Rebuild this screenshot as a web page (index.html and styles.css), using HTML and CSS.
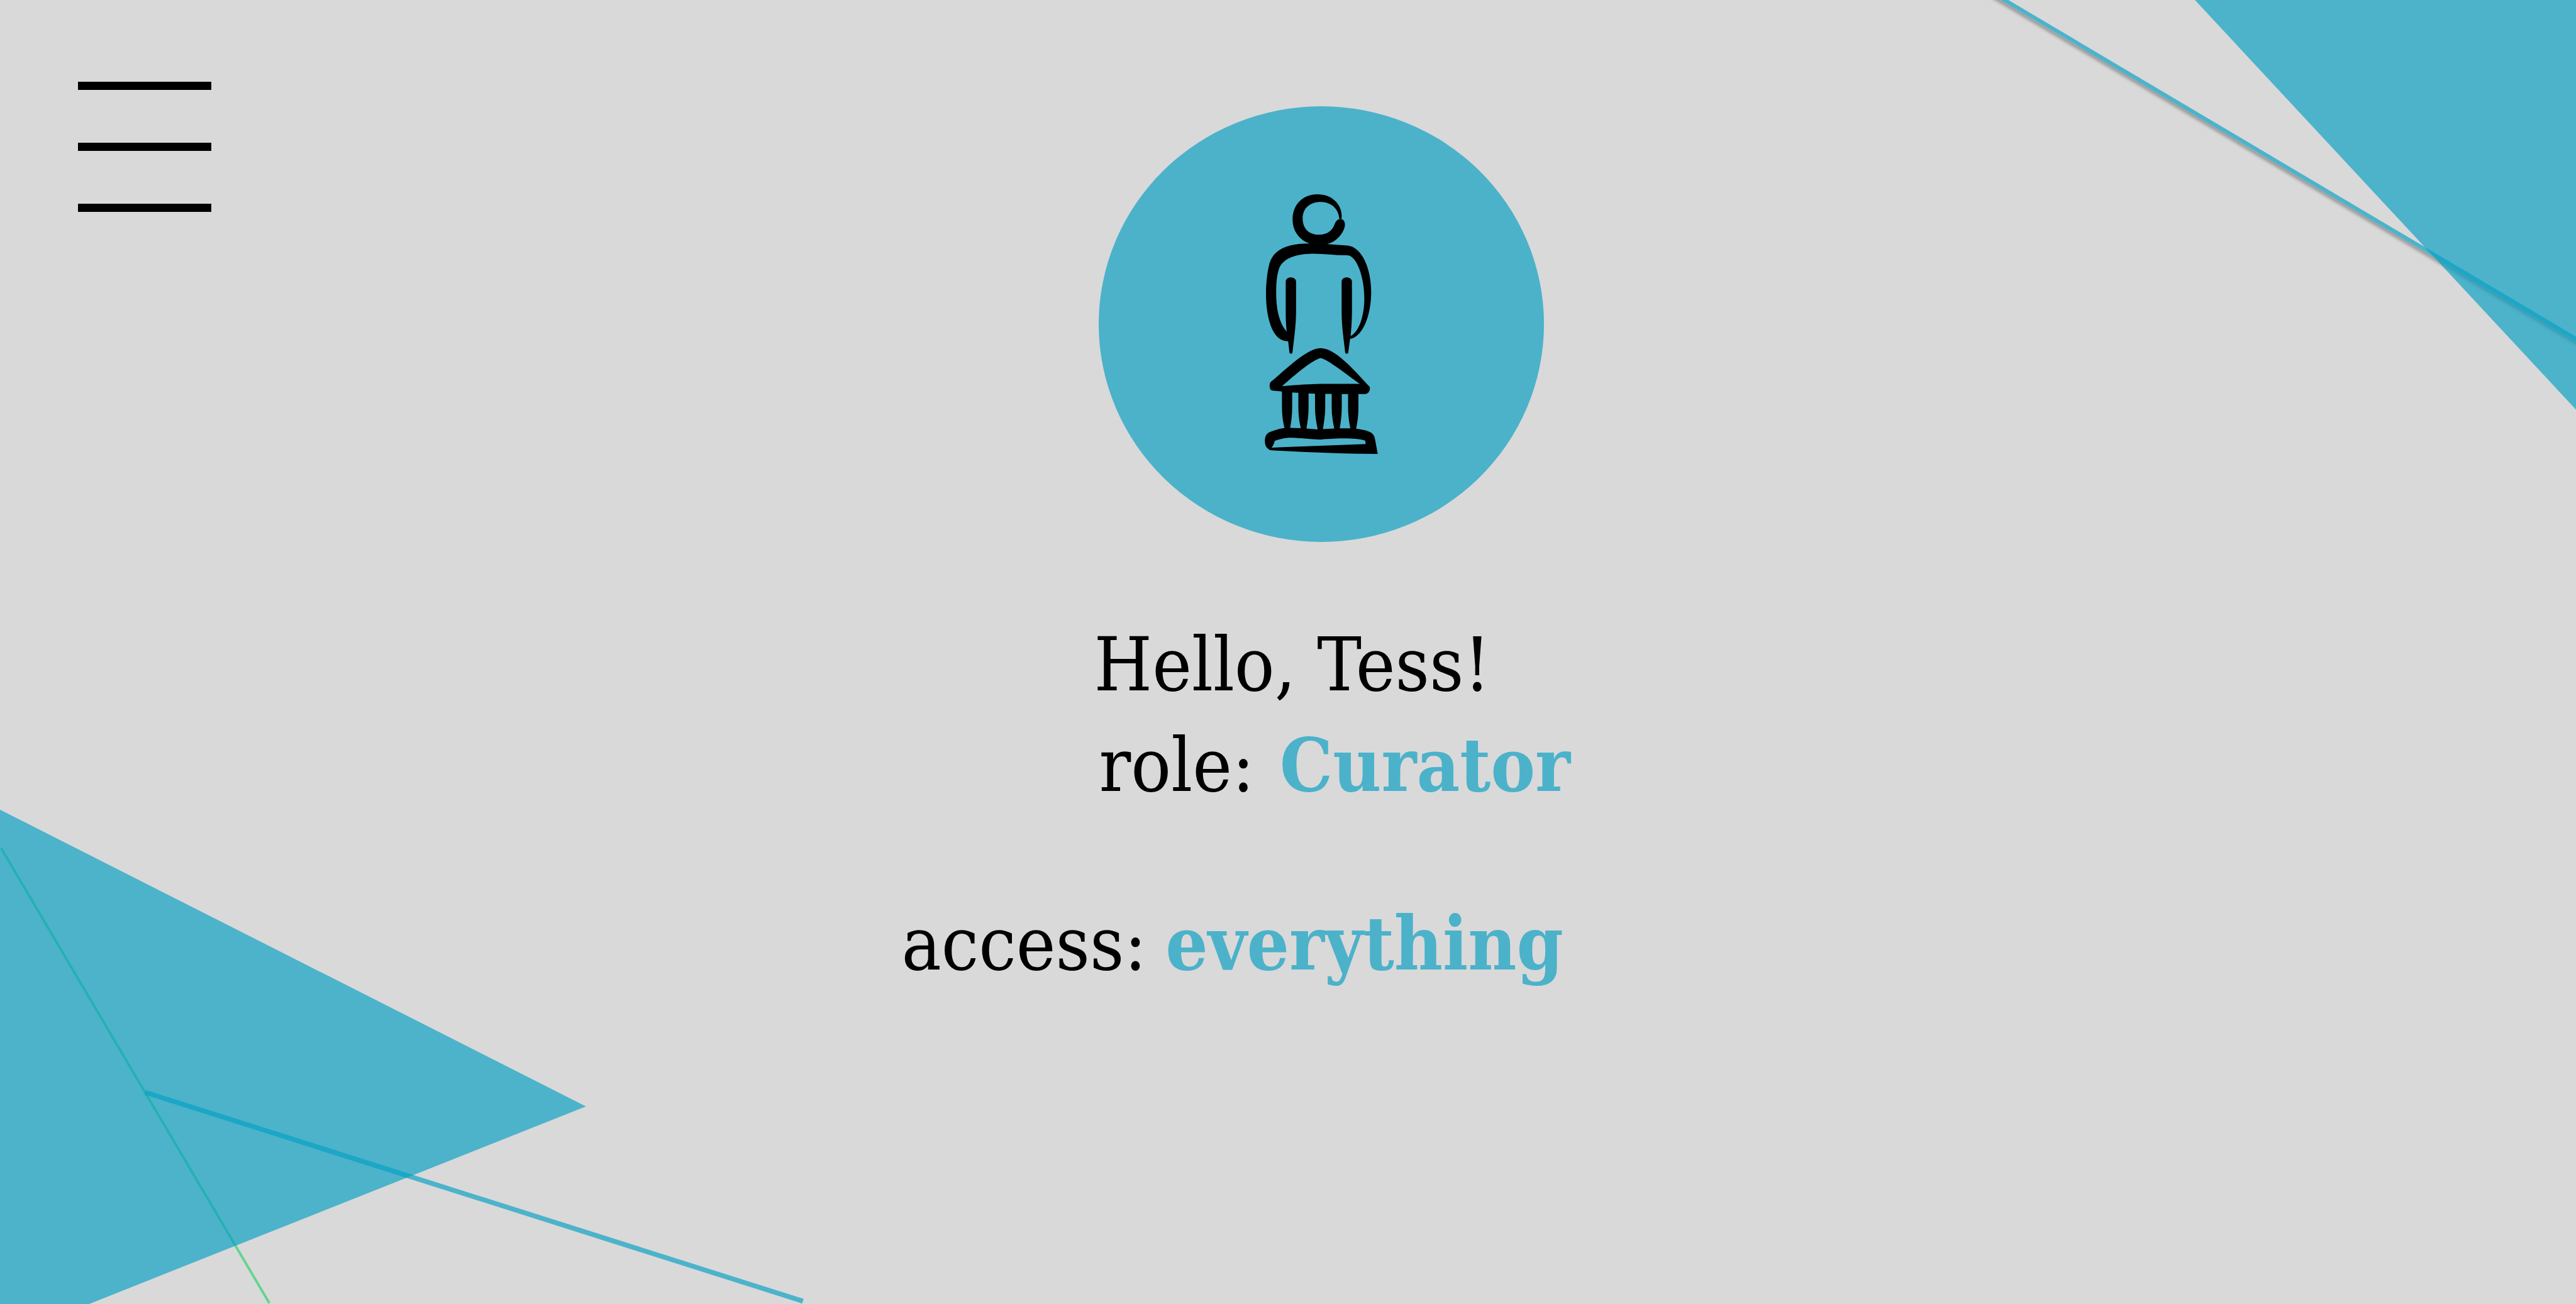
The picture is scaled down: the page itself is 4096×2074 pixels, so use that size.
FILE: index.html
```html
<!DOCTYPE html>
<html lang="en">
<head>
  <meta charset="utf-8">
  <meta name="viewport" content="width=device-width, initial-scale=1">
  <title>Profile</title>
  <link rel="stylesheet" href="styles.css">
</head>
<body>
  <svg class="backdrop" viewBox="0 0 6388 3234" preserveAspectRatio="none" aria-hidden="true">
    <defs>
      <filter id="soft" filterUnits="userSpaceOnUse" x="4800" y="-100" width="1700" height="1100">
        <feGaussianBlur stdDeviation="4"/>
      </filter>
      <clipPath id="below-ray">
        <path d="M4871 -53L6488 906V1000H4871Z"/>
      </clipPath>
    </defs>
    <g clip-path="url(#below-ray)">
      <path class="shadow" filter="url(#soft)" d="M4871 -51L6488 908"/>
    </g>
    <path class="shape" d="M5443 0H6388V1016Z"/>
    <path class="ray" d="M4871 -59L6488 900"/>
    <path class="thread" d="M3 2104L668 3232"/>
    <path class="shape" d="M0 2008L1453 2744L221 3234H0Z"/>
    <path class="ray ray-wide" d="M360 2709L1991 3227"/>
  </svg>

  <header class="topbar">
    <button class="menu" type="button" aria-label="Menu">
      <span class="bar"></span>
      <span class="bar"></span>
      <span class="bar"></span>
    </button>
  </header>

  <main class="profile">
    <div class="avatar">
      <svg class="curator" viewBox="168 125 840 1933" role="img" aria-label="Curator">
        <path d="M722 308C716 232 662 182 582 182C500 182 449 232 449 305C449 380 496 426 570 426C634 426 668 396 686 350C696 324 712 309 730 309C752 309 764 328 764 352C762 382 746 412 722 440C698 468 668 486 632 496L780 507C890 514 960 680 959 856C958 1040 890 1188 802 1202L788 1306Q786 1312 777 1312Q768 1312 766 1306C752 1180 739 1110 739 990V772C742 734 812 734 816 772V990C816 1060 812 1120 806 1180C868 1150 908 1030 908 900C908 740 850 578 780 579C690 580 610 566 520 567C390 570 306 604 276 672C258 720 252 780 252 858C252 990 278 1090 330 1146C324 1090 323 1050 323 990V772C326 734 396 734 400 772V990C400 1100 386 1190 373 1306Q371 1312 362 1312Q353 1312 351 1306L341 1219C240 1226 176 1080 176 860C177 780 186 700 202 640C230 540 330 490 500 491C424 464 374 398 374 312C374 202 450 125 558 125C670 125 740 200 740 290L738 308Z"/>
        <path fill-rule="evenodd" d="M211 1522C330 1424 480 1270 584 1270C690 1270 830 1430 934 1544Q950 1556 950 1568Q948 1606 918 1612H864V1716C864 1776 856 1826 847 1870C888 1876 930 1884 956 1898C974 1908 984 1926 988 1950L1008 2058C740 2056 460 2046 206 2030C200 2028 198 2022 190 2018C174 2006 168 1986 168 1960C168 1926 180 1904 212 1892C246 1878 280 1868 314 1865C303 1820 295 1770 295 1708V1594L226 1586C212 1586 210 1580 208 1574C200 1554 202 1536 211 1522ZM296 1554C400 1544 510 1536 640 1536H874C780 1470 640 1356 584 1344C530 1352 390 1468 296 1554ZM371 1600V1712C371 1770 364 1820 356 1864L435 1866C424 1820 417 1770 417 1712V1603ZM493 1608V1712C493 1770 486 1820 477 1869L561 1875C550 1820 541 1770 541 1712V1610ZM617 1611V1712C617 1770 608 1820 600 1873L684 1868C674 1820 665 1770 665 1712V1611ZM740 1612V1712C740 1770 733 1820 725 1867L804 1867C794 1820 787 1770 787 1712V1612ZM242 1961C236 1980 230 1996 218 2011L918 1984L914 1958C840 1940 750 1938 580 1951C470 1948 350 1926 292 1946Q264 1952 242 1961Z"/>
      </svg>
    </div>

    <div class="identity">
      <h1 class="line">Hello, Tess!</h1>
      <p class="line pair role"><span>role:</span><strong>Curator</strong></p>
    </div>
    <p class="line pair access"><span>access:</span><strong>everything</strong></p>
  </main>
</body>
</html>
```
FILE: styles.css
```css
* {
  box-sizing: border-box;
}

body {
  position: relative;
  min-height: 100vh;
  margin: 0;
  overflow-x: hidden;
  background: #d9d9d9;
  color: #000;
  font-family: "DejaVu Serif Condensed", "Liberation Serif", serif;
  font-size: 118px;
}

/* Decorative shapes behind the content */
.backdrop {
  position: absolute;
  inset: 0;
  z-index: -1;
  width: 100%;
  height: 100%;
}

.shape {
  fill: rgba(7, 160, 195, 0.675);
}

.ray,
.thread,
.shadow {
  fill: none;
}

.ray {
  stroke: rgba(7, 160, 195, 0.675);
  stroke-width: 10;
}

.ray-wide {
  stroke-width: 12;
}

.thread {
  stroke: #60d58e;
  stroke-width: 6;
}

.shadow {
  stroke: rgba(0, 0, 0, 0.32);
  stroke-width: 10;
}

.topbar {
  display: flex;
  height: 169px;
  padding: 130px 124px 0;
}

.menu {
  display: flex;
  flex-direction: column;
  gap: 84px;
  width: 212px;
  height: 207px;
  padding: 0;
  border: 0;
  background: none;
  cursor: pointer;
}

.bar {
  flex: none;
  width: 100%;
  height: 13px;
  background: #000;
}

.profile {
  display: flex;
  flex-direction: column;
  align-items: flex-start;
  padding-left: 35%;
}

.avatar {
  display: flex;
  align-items: center;
  justify-content: center;
  width: 708px;
  height: 693px;
  margin-left: 313px;
  border-radius: 50%;
  background: #4bb2ca;
}

.curator {
  width: 180px;
  height: 413px;
}

.identity {
  margin: 115px 0 0 306px;
}

.line {
  margin: 0;
  font-size: inherit;
  font-weight: 400;
  line-height: 160px;
  white-space: nowrap;
}

.pair {
  display: flex;
  gap: 44px;
}

.pair strong {
  color: #4bb2ca;
  font-weight: 700;
}

.role {
  padding-left: 8px;
  gap: 40px;
}

.access {
  gap: 30px;
  margin-top: 124px;
}
```
